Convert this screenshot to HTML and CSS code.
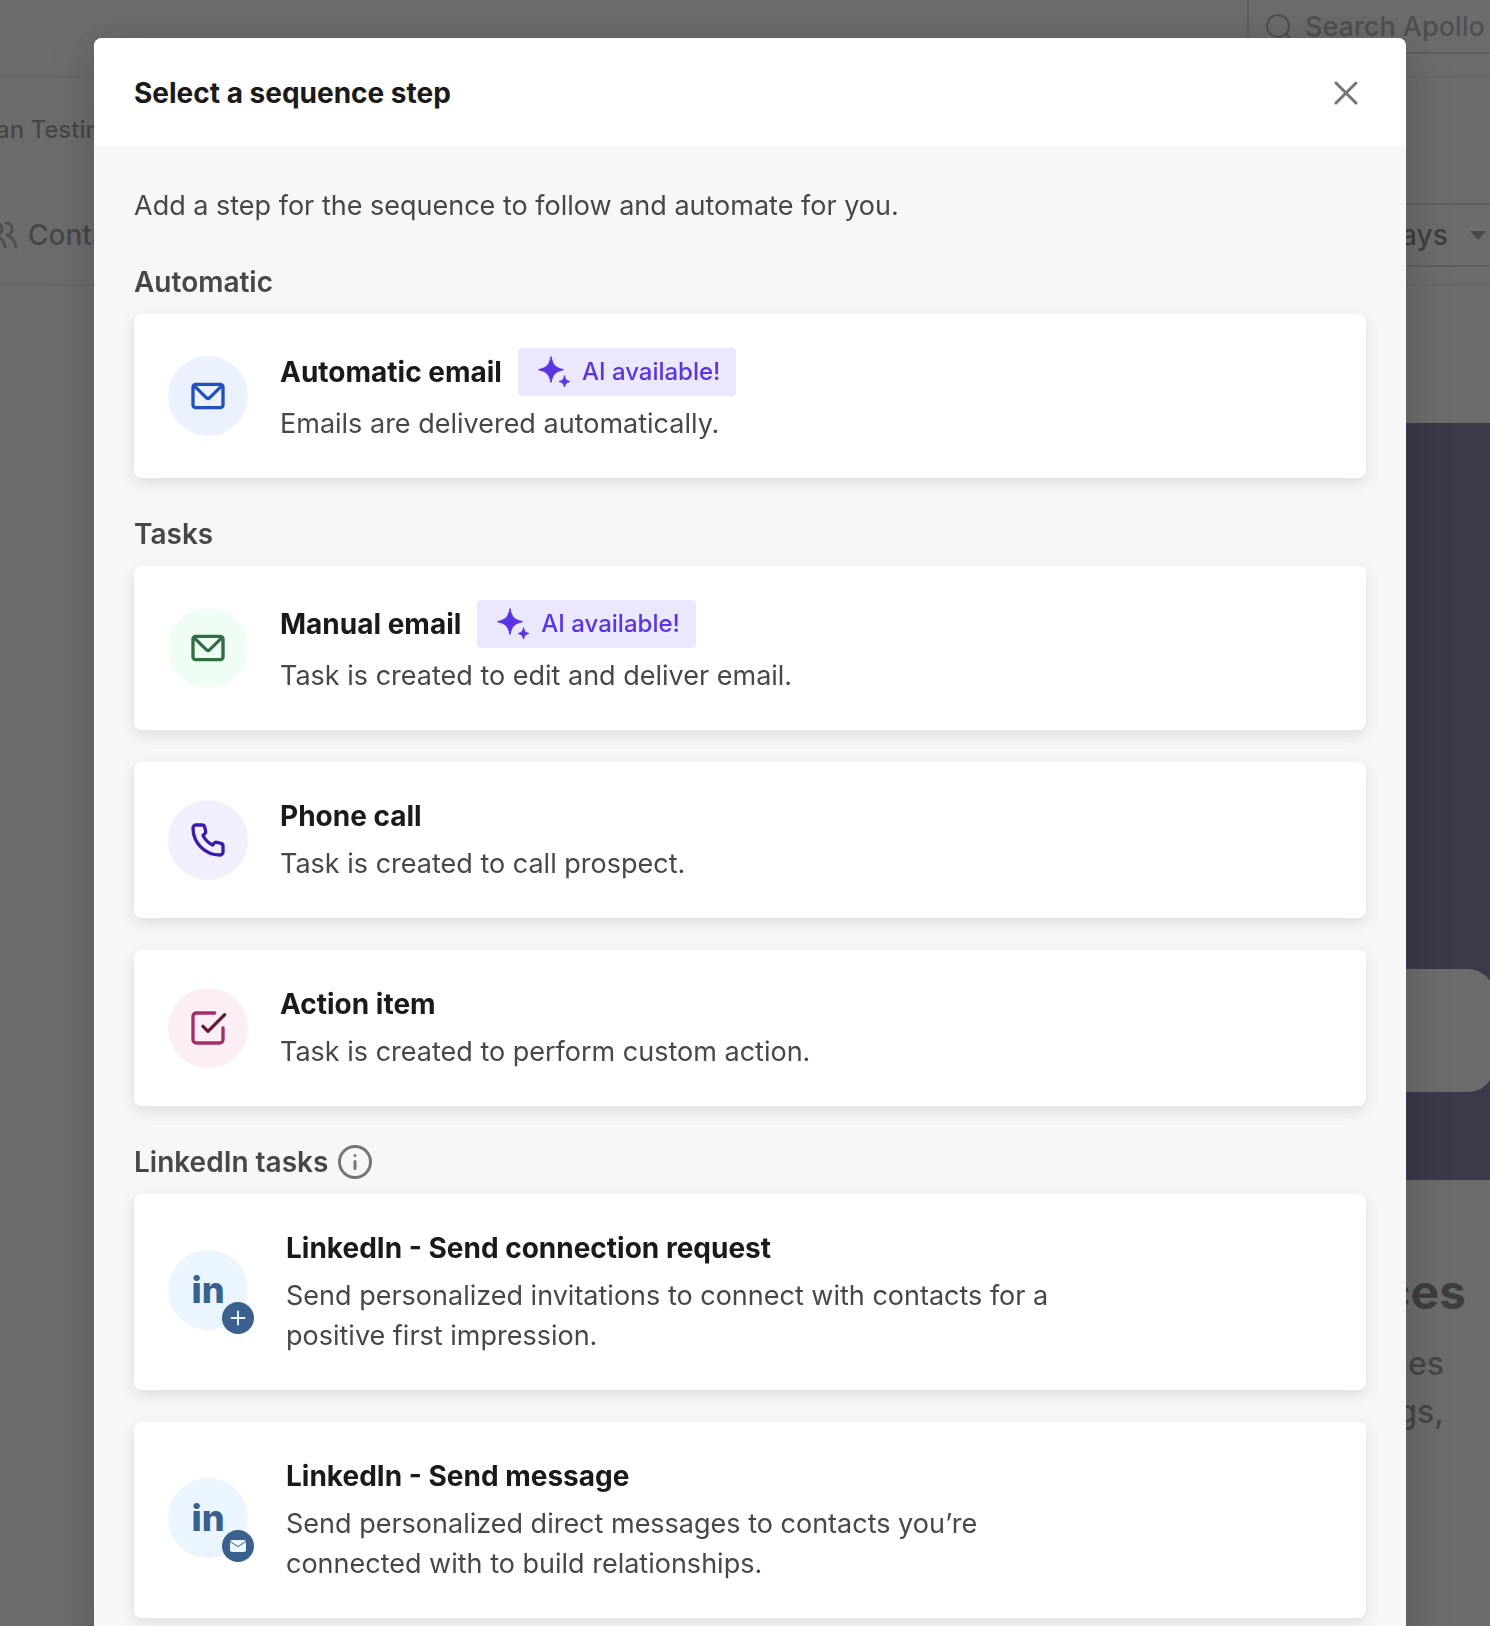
FILE: index.html
```html
<!DOCTYPE html>
<html lang="en">
<head>
    <meta charset="UTF-8">
    <meta name="viewport" content="width=device-width, initial-scale=1.0">
    <title>Select a sequence step</title>
    <link rel="stylesheet" href="styles.css">
</head>
<body>
    <div class="app">
        <div class="topbar">
            <label class="search">
                <svg class="searchIcon" viewBox="0 0 28 28"><circle cx="13" cy="13" r="11"/><path d="M21 21l6 6"/></svg>
                <input type="text" placeholder="Search Apollo" aria-label="Search Apollo">
            </label>
        </div>
        <div class="breadcrumb">an Testing</div>
        <div class="tabs">
            <a class="tab" href="#">
                <svg class="tabIcon" viewBox="0 0 32 28"><circle cx="10" cy="8" r="6"/><path d="M1 26c1-6 4-10 9-10s8 4 9 10"/><path d="M20 2c8 0 8 11 1 12c5 2 8 6 9 12"/></svg>
                Contacts
            </a>
            <div class="range">
                <select aria-label="Date range">
                    <option>Last 30 Days</option>
                </select>
                <svg class="caret" viewBox="0 0 16 9"><path d="M0 0h16l-8 9z"/></svg>
            </div>
        </div>
        <div class="banner">
            <div class="bannerBox"></div>
        </div>
        <div class="promo">
            <div class="promoTitle">Sequences</div>
            <div class="promoText">sequences<br>meetings,</div>
        </div>
    </div>

    <div class="backdrop">
        <div class="modal" role="dialog" aria-labelledby="modalTitle">
            <div class="modalHeader">
                <h2 class="title" id="modalTitle">Select a sequence step</h2>
                <button class="closeBtn" aria-label="Close">
                    <svg viewBox="0 0 24 24"><path d="M2 2l20 20M22 2l-20 20"/></svg>
                </button>
            </div>
            <div class="modalBody">
                <p class="intro">Add a step for the sequence to follow and automate for you.</p>

                <section class="group">
                    <h3 class="groupTitle">Automatic</h3>
                    <div class="cards">
                        <button class="card">
                            <span class="icon blue">
                                <svg viewBox="0 0 24 24"><rect x="3" y="5" width="18" height="14" rx="1.6"/><path d="M3.6 5.8l7.5 7.3a1.3 1.3 0 0 0 1.8 0l7.5-7.3"/></svg>
                            </span>
                            <span class="info">
                                <span class="row">
                                    <span class="title">Automatic email</span>
                                    <span class="aiBadge">
                                        <svg viewBox="0 0 40 40"><path d="M17 5c2 8.500 4 10.500 12.500 12.700c-8.500 2.200-10.500 4.200-12.500 12.700c-2-8.500-4-10.500-12.500-12.700c8.500-2.200 10.500-4.200 12.500-12.700z"/><path d="M30.500 24c1 3.800 1.700 4.500 5.500 5.500c-3.800 1-4.500 1.700-5.500 5.500c-1-3.800-1.700-4.500-5.500-5.500c3.800-1 4.500-1.700 5.500-5.500z"/></svg>
                                        AI available!
                                    </span>
                                </span>
                                <span class="desc">Emails are delivered automatically.</span>
                            </span>
                        </button>
                    </div>
                </section>

                <section class="group">
                    <h3 class="groupTitle">Tasks</h3>
                    <div class="cards">
                        <button class="card">
                            <span class="icon green">
                                <svg viewBox="0 0 24 24"><rect x="3" y="5" width="18" height="14" rx="1.6"/><path d="M3.6 5.8l7.5 7.3a1.3 1.3 0 0 0 1.8 0l7.5-7.3"/></svg>
                            </span>
                            <span class="info">
                                <span class="row">
                                    <span class="title">Manual email</span>
                                    <span class="aiBadge">
                                        <svg viewBox="0 0 40 40"><path d="M17 5c2 8.500 4 10.500 12.500 12.700c-8.500 2.200-10.500 4.200-12.500 12.700c-2-8.500-4-10.500-12.500-12.700c8.500-2.200 10.500-4.200 12.500-12.700z"/><path d="M30.500 24c1 3.800 1.700 4.500 5.500 5.500c-3.800 1-4.500 1.700-5.500 5.500c-1-3.800-1.700-4.500-5.500-5.500c3.800-1 4.500-1.700 5.500-5.500z"/></svg>
                                        AI available!
                                    </span>
                                </span>
                                <span class="desc">Task is created to edit and deliver email.</span>
                            </span>
                        </button>
                        <button class="card">
                            <span class="icon purple">
                                <svg viewBox="0 0 24 24"><path d="M4.800 3H8.300a1.700 1.700 0 0 1 1.700 1.300l.6 2.400a1.700 1.700 0 0 1-.6 1.700L9 9.200a12 12 0 0 0 5.800 5.800l.8-1a1.700 1.700 0 0 1 1.700-.6l2.400.6A1.700 1.700 0 0 1 21 15.700V19.200A1.800 1.800 0 0 1 19.200 21C10.200 21 3 13.800 3 4.800A1.800 1.800 0 0 1 4.800 3z"/></svg>
                            </span>
                            <span class="info">
                                <span class="title">Phone call</span>
                                <span class="desc">Task is created to call prospect.</span>
                            </span>
                        </button>
                        <button class="card">
                            <span class="icon pink">
                                <svg viewBox="0 0 24 24"><path d="M16 3H5a2 2 0 0 0-2 2v14a2 2 0 0 0 2 2h14a2 2 0 0 0 2-2v-7"/><path class="tick" d="M9 11l3 3l10-10"/></svg>
                            </span>
                            <span class="info">
                                <span class="title">Action item</span>
                                <span class="desc">Task is created to perform custom action.</span>
                            </span>
                        </button>
                    </div>
                </section>

                <section class="group">
                    <h3 class="groupTitle">
                        LinkedIn tasks
                        <svg class="infoIcon" viewBox="0 0 34 34"><circle cx="17" cy="17" r="15.500"/><path d="M17 16.500v7M17 10.500v.1"/></svg>
                    </h3>
                    <div class="cards">
                        <button class="card">
                            <span class="iconWrap">
                                <span class="icon linkedin">in</span>
                                <span class="miniBadge">
                                    <svg viewBox="0 0 32 32"><path d="M16 9.500v13M9.500 16h13"/></svg>
                                </span>
                            </span>
                            <span class="info">
                                <span class="title">LinkedIn - Send connection request</span>
                                <span class="desc">Send personalized invitations to connect with contacts for a positive first impression.</span>
                            </span>
                        </button>
                        <button class="card">
                            <span class="iconWrap">
                                <span class="icon linkedin">in</span>
                                <span class="miniBadge">
                                    <svg viewBox="0 0 32 32"><rect class="miniMail" x="8" y="10" width="16" height="12" rx="2"/><path class="miniFlap" d="M8 11.500l8 5l8-5"/></svg>
                                </span>
                            </span>
                            <span class="info">
                                <span class="title">LinkedIn - Send message</span>
                                <span class="desc">Send personalized direct messages to contacts you’re connected with to build relationships.</span>
                            </span>
                        </button>
                    </div>
                </section>
            </div>
        </div>
    </div>
</body>
</html>
```
FILE: styles.css
```css
body{
    margin: 0;
    font-family: Inter, "Liberation Sans", sans-serif;
    font-size: 27px;
    line-height: 40px;
    color: #474747;
    background-color: white;
}
*{
    box-sizing: border-box;
}
h2, h3, p{
    margin: 0;
}
button, input, select{
    font-family: inherit;
    font-size: inherit;
}
svg{
    display: block;
    flex-shrink: 0;
    fill: none;
    stroke: currentColor;
    stroke-linecap: round;
    stroke-linejoin: round;
}

/* page behind the modal */
.app{
    height: 100vh;
    overflow: hidden;
}
.topbar{
    display: flex;
    justify-content: flex-end;
    height: 78px;
    border-bottom: 2px solid #e6e6e6;
}
.search{
    display: flex;
    gap: 12px;
    width: 243px;
    height: 54px;
    padding-left: 16px;
    border-left: 2px solid #bebebe;
    border-bottom: 2px solid #bebebe;
    color: #757575;
}
.searchIcon{
    width: 28px;
    height: 28px;
    margin-top: 13px;
    stroke-width: 2;
}
.search input{
    flex: 1;
    min-width: 0;
    padding: 0;
    border: none;
    outline: none;
    background: none;
    font-weight: 500;
}
.search input::placeholder{
    color: #757575;
}
.breadcrumb{
    margin-left: -4px;
    padding: 32px 0;
    font-size: 24px;
    font-weight: 500;
}
.tabs{
    display: flex;
    justify-content: space-between;
    align-items: center;
    height: 104px;
    padding-top: 4px;
    border-bottom: 2px solid #e6e6e6;
    font-size: 28px;
    font-weight: 500;
}
.tab{
    display: flex;
    align-items: center;
    gap: 10px;
    margin-left: -14px;
    color: #474747;
    text-decoration: none;
}
.tabIcon{
    width: 32px;
    height: 28px;
    stroke-width: 3;
    color: #757575;
}
.range{
    position: relative;
}
.range select{
    appearance: none;
    height: 64px;
    padding: 0 42px 0 20px;
    border: 2px solid #bebebe;
    border-right: none;
    background: none;
    color: #1a1a1a;
    font-weight: 500;
}
.caret{
    position: absolute;
    right: 4px;
    top: 28px;
    width: 16px;
    height: 9px;
    fill: #5c5c5c;
    stroke: none;
}
.banner{
    display: flex;
    align-items: flex-end;
    height: 757px;
    margin-top: 137px;
    margin-left: 50%;
    padding: 0 0 88px 80px;
    background-color: #14005a;
}
.bannerBox{
    flex: 1;
    height: 123px;
    margin-right: -4px;
    border-radius: 26px;
    background-color: white;
}
.promo{
    padding: 80px 24px 0 0;
    text-align: right;
}
.promoTitle{
    font-size: 48px;
    font-weight: 700;
    line-height: 64px;
    color: #1a1a1a;
}
.promoText{
    padding: 16px 22px 0 0;
    font-size: 32px;
    font-weight: 500;
    line-height: 48px;
}

/* modal */
.backdrop{
    position: fixed;
    inset: 0;
    padding: 38px 84px 40px 94px;
    overflow-y: auto;
    scrollbar-width: none;
    background-color: rgba(71, 71, 71, 0.8);
}
.modal{
    border-radius: 8px;
    background-color: #f7f7f7;
    box-shadow: 0 8px 48px rgba(0, 0, 0, 0.2);
}
.modalHeader{
    display: flex;
    justify-content: space-between;
    align-items: center;
    height: 108px;
    padding: 2px 40px 0;
    border-radius: 8px 8px 0 0;
    background-color: white;
}
.title{
    font-size: 28px;
    font-weight: 700;
    line-height: 40px;
    color: #1a1a1a;
}
.closeBtn{
    display: flex;
    justify-content: center;
    align-items: center;
    width: 40px;
    height: 40px;
    padding: 0;
    border: none;
    background: none;
    color: #757575;
    cursor: pointer;
}
.closeBtn svg{
    width: 24px;
    height: 24px;
    stroke-width: 3;
}
.modalBody{
    padding: 40px;
}
.group{
    margin-top: 36px;
}
.groupTitle{
    display: flex;
    align-items: center;
    gap: 10px;
    margin-bottom: 12px;
    font-size: 28px;
    font-weight: 600;
}
.infoIcon{
    width: 34px;
    height: 34px;
    stroke-width: 3;
    color: #757575;
}
.cards{
    display: flex;
    flex-direction: column;
    gap: 32px;
}
.card{
    display: flex;
    align-items: center;
    gap: 32px;
    width: 100%;
    padding: 34px;
    border: none;
    border-radius: 8px;
    background-color: white;
    box-shadow: 0 5px 16px rgba(0, 0, 0, 0.11);
    color: #474747;
    line-height: 40px;
    text-align: left;
    cursor: pointer;
}
.icon{
    display: flex;
    justify-content: center;
    align-items: center;
    flex-shrink: 0;
    width: 80px;
    height: 80px;
    border-radius: 50%;
}
.icon svg{
    width: 40px;
    height: 40px;
    stroke-width: 2;
}
.blue{
    background-color: #ebf1fe;
    color: #2251be;
}
.green{
    background-color: #effdf4;
    color: #306f44;
}
.purple{
    background-color: #f1eefd;
    color: #3a1bae;
}
.pink{
    background-color: #fbeef5;
    color: #a52e68;
}
.tick{
    stroke: #651839;
}
.linkedin{
    background-color: #ebf5fe;
    color: #3a608f;
    font-size: 36px;
    font-weight: 800;
}
.iconWrap{
    position: relative;
    flex-shrink: 0;
    width: 86px;
    height: 84px;
}
.miniBadge{
    position: absolute;
    right: 0;
    bottom: 0;
    width: 32px;
    height: 32px;
    border-radius: 50%;
    background-color: #3a608f;
    color: #ebf5fe;
}
.miniBadge svg{
    stroke-width: 2;
}
.miniMail{
    fill: #ebf5fe;
    stroke: none;
}
.miniFlap{
    stroke: #3a608f;
    stroke-width: 1;
}
.info{
    display: flex;
    flex-direction: column;
    gap: 8px;
}
.row{
    display: flex;
    align-items: center;
    gap: 16px;
}
.aiBadge{
    display: flex;
    align-items: center;
    gap: 8px;
    height: 48px;
    padding: 0 16px;
    border-radius: 4px;
    background-color: #ebe7fc;
    color: #5a34e4;
    font-size: 24px;
    font-weight: 500;
}
.aiBadge svg{
    width: 40px;
    height: 40px;
    fill: currentColor;
    stroke-width: 1;
}
.desc{
    max-width: 800px;
}
```
